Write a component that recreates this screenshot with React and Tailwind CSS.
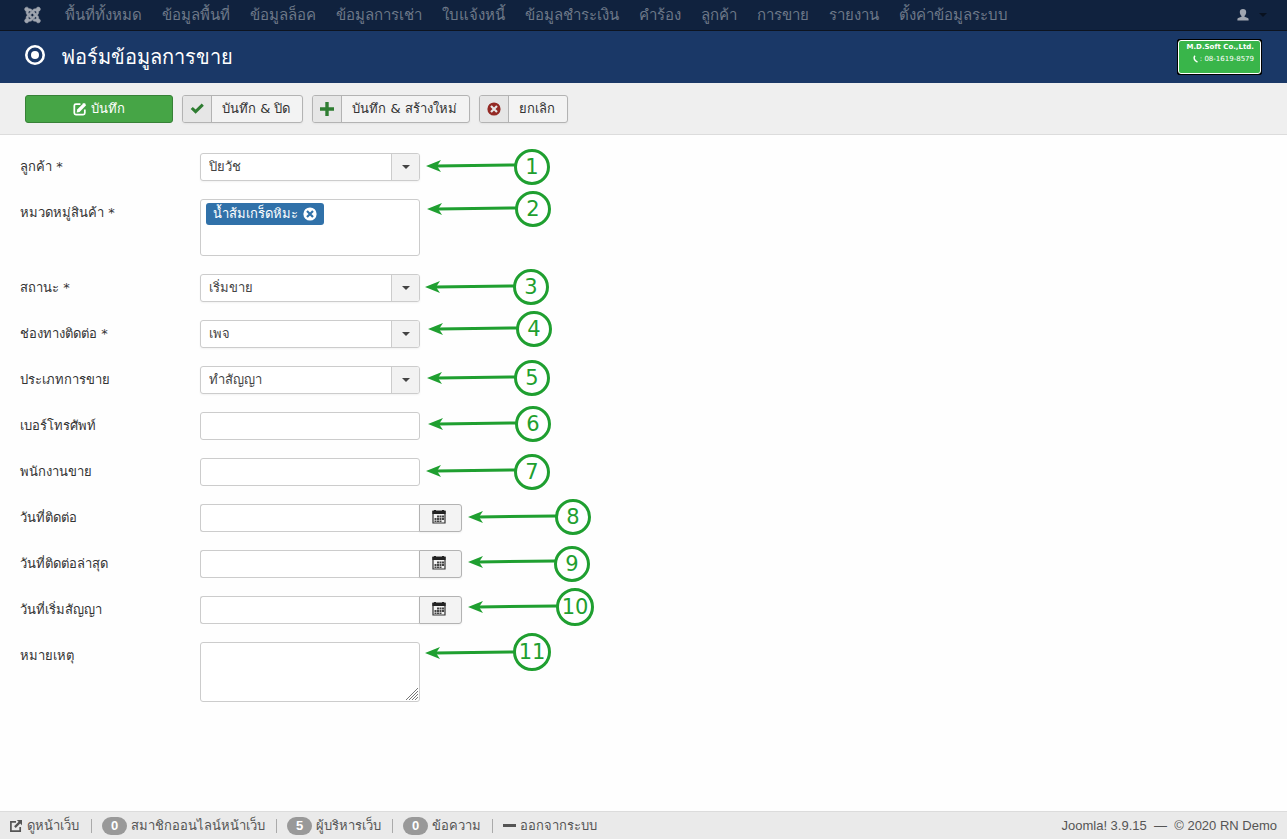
import React, { useState } from 'react';
import { FaJoomla } from 'react-icons/fa';

const menuItems = [
  'พื้นที่ทั้งหมด',
  'ข้อมูลพื้นที่',
  'ข้อมูลล็อค',
  'ข้อมูลการเช่า',
  'ใบแจ้งหนี้',
  'ข้อมูลชำระเงิน',
  'คำร้อง',
  'ลูกค้า',
  'การขาย',
  'รายงาน',
  'ตั้งค่าข้อมูลระบบ',
];

// tip = arrow head, cx/cy = centre of the number circle
const steps = [
  { n: 1, tipX: 426, tipY: 31, cx: 532, cy: 32, r: 16.5 },
  { n: 2, tipX: 427, tipY: 74, cx: 533, cy: 74, r: 16.5 },
  { n: 3, tipX: 425, tipY: 152, cx: 531, cy: 152, r: 16.5 },
  { n: 4, tipX: 428, tipY: 194, cx: 534, cy: 194, r: 16.5 },
  { n: 5, tipX: 427, tipY: 243, cx: 532, cy: 243, r: 16.5 },
  { n: 6, tipX: 428, tipY: 289, cx: 533, cy: 289, r: 16.5 },
  { n: 7, tipX: 426, tipY: 336, cx: 532, cy: 337, r: 16.5 },
  { n: 8, tipX: 468, tipY: 382, cx: 573, cy: 382, r: 16.5 },
  { n: 9, tipX: 468, tipY: 427, cx: 572, cy: 429, r: 16.5 },
  { n: 10, tipX: 468, tipY: 472, cx: 575, cy: 472, r: 17.5 },
  { n: 11, tipX: 425, tipY: 518, cx: 532, cy: 517, r: 17.5 },
];

const EditIcon = () => (
  <svg className="w-3.5 h-3.5" viewBox="0 0 16 16" fill="none" aria-hidden="true">
    <path d="M13.5 8.5v4.2c0 1-.8 1.8-1.8 1.8H3.3c-1 0-1.8-.8-1.8-1.8V4.3c0-1 .8-1.8 1.8-1.8h5.2" stroke="currentColor" strokeWidth="2" />
    <path d="M4.8 8.6 12 1.4a.8.8 0 0 1 1.1 0l1.6 1.6a.8.8 0 0 1 0 1.1l-7.2 7.2-3.3.6z" fill="currentColor" />
  </svg>
);

const CheckIcon = () => (
  <svg className="w-3.5 h-3.5 text-[#2f7d32]" viewBox="0 0 16 16" aria-hidden="true">
    <path d="M13.4 1.8 15.8 4.2 6.4 13.400.8 8 3.2 5.6l3.200 3z" fill="currentColor" />
  </svg>
);

const PlusIcon = () => (
  <svg className="w-3.5 h-3.5 text-[#2f7d32]" viewBox="0 0 14 14" aria-hidden="true">
    <path d="M5.3 0h3.4v5.3H14v3.4H8.7V14H5.3V8.7H0V5.3h5.3z" fill="currentColor" />
  </svg>
);

const CancelIcon = ({ className, cross }) => (
  <svg className={className} viewBox="0 0 14 14" aria-hidden="true">
    <circle cx="7" cy="7" r="6.6" fill="currentColor" />
    <path d="m4 4 6 6m0-6-6 6" stroke={cross} strokeWidth="2.2" />
  </svg>
);

const CalendarIcon = () => (
  <svg className="w-3.5 h-3.5" viewBox="0 0 14 14" aria-hidden="true">
    <path d="M1 1h12v12H1z" fill="#f3f3f3" stroke="#333" strokeWidth="1.2" />
    <path d="M.4 1h13.200v3H.4z" fill="#222" />
    <path d="M2 0h2v1H2zM10 0h2v1h-2z" fill="#222" />
    <path d="M5 5.500h2v2H5zM7.500 5.500h2v2h-2zM10 5.500h2v2h-2zM2.500 8h2v2h-2zM5 8h2v2H5zM7.500 8h2v2h-2zM10 8h2v2h-2zM2.500 10.500h2v1.500h-2zM5 10.500h2v1.500H5zM7.500 10.500h2v1.500h-2z" fill="#444" />
  </svg>
);

const UserIcon = () => (
  <svg className="w-3 h-3" viewBox="0 0 12 12" aria-hidden="true">
    <path d="M6 0c2 0 3.200 1.200 3.200 3 0 1.600-.7 3.200-1.700 4v.8l3.300 1.200c.6.300.8.700.8 1.300v1.200H.4v-1.200c0-.6.200-1 .8-1.300l3.300-1.200V7c-1-.8-1.700-2.400-1.700-4 0-1.800 1.200-3 3.200-3z" fill="currentColor" />
  </svg>
);

const OutIcon = () => (
  <svg className="w-3 h-3" viewBox="0 0 12 12" fill="none" aria-hidden="true">
    <path d="M6 1.800H.9v9.300h9.300V7" stroke="currentColor" strokeWidth="1.700" />
    <path d="M6.800 0H12v5.200l-1.800-1.800-4.500 4.500-1.600-1.600 4.500-4.500z" fill="currentColor" />
  </svg>
);

const Caret = ({ className }) => (
  <svg className={className} viewBox="0 0 8 4" aria-hidden="true">
    <path d="M0 0h8L4 4z" fill="currentColor" />
  </svg>
);

const ToolButton = ({ icon, children }) => (
  <button type="button" className="flex h-7 rounded-[3px] border border-[#b3b3b3] bg-[#f3f3f3] text-[#333] overflow-hidden shadow-xs">
    <span className="flex h-full w-[29px] items-center justify-center border-r border-[#b3b3b3] bg-[#e6e6e6]">{icon}</span>
    <span className="pl-2.5 pr-3 leading-[26px]">{children}</span>
  </button>
);

const Row = ({ id, label, children }) => (
  <div className="flex items-start">
    <label htmlFor={id} className="w-[180px] shrink-0 leading-7 font-['DejaVu_Sans',sans-serif]">{label}</label>
    {children}
  </div>
);

const SelectField = ({ id, label, value }) => (
  <Row id={id} label={label}>
    <div className="relative w-[220px]">
      <select id={id} defaultValue={value} className="h-7 w-full appearance-none rounded-[3px] border border-[#ccc] bg-white px-2 leading-[26px] text-[#444] shadow-xs">
        <option>{value}</option>
      </select>
      <span className="pointer-events-none absolute inset-y-px right-px flex w-7 items-center justify-center rounded-r-[2px] border-l border-[#ccc] bg-[#f2f2f2] text-[#444]">
        <Caret className="h-1 w-2" />
      </span>
    </div>
  </Row>
);

const TextField = ({ id, label }) => (
  <Row id={id} label={label}>
    <input id={id} type="text" className="h-7 w-[220px] rounded-[3px] border border-[#ccc] bg-white px-2" />
  </Row>
);

const DateField = ({ id, label }) => (
  <Row id={id} label={label}>
    <div className="flex">
      <input id={id} type="text" className="h-7 w-[219px] rounded-l-[3px] border border-r-0 border-[#ccc] bg-white px-2" />
      <button type="button" aria-label={label} className="flex h-7 w-[43px] items-center justify-center rounded-r-[3px] border border-[#b3b3b3] bg-[#f3f3f3] pr-1 pb-0.5 shadow-xs">
        <CalendarIcon />
      </button>
    </div>
  </Row>
);

const StepMarks = () => (
  <svg className="pointer-events-none absolute left-0 top-0 h-[560px] w-[620px]" viewBox="0 0 620 560">
    {steps.map(s => (
      <g key={s.n}>
        <path d={`M${s.tipX + 10} ${s.tipY}L${s.cx - s.r} ${s.tipY - 1}`} stroke="#1f9f30" strokeWidth="3" />
        <path d={`M${s.tipX} ${s.tipY}l15-6-4 6 4 6z`} fill="#1f9f30" />
        <circle cx={s.cx} cy={s.cy} r={s.r} fill="#fff" stroke="#1f9f30" strokeWidth="3" />
        <text x={s.cx} y={s.cy + 7} textAnchor="middle" fill="#1f9f30" className="font-['DejaVu_Sans'] text-[21px]">{s.n}</text>
      </g>
    ))}
  </svg>
);

const StatusItem = ({ count, children }) => (
  <li className="flex h-3.5 items-center border-l border-[#aaa] pl-2.5 pr-[11px]">
    <a href="#" className="flex items-center gap-1">
      {count !== undefined && (
        <span className="flex h-[18px] w-[25px] items-center justify-center rounded-full bg-[#999] font-bold text-white">{count}</span>
      )}
      {children}
    </a>
  </li>
);

const App = () => {
  const [tags, setTags] = useState(['น้ำส้มเกร็ดหิมะ']);

  return (
    <div className="flex min-h-screen flex-col bg-[#fefefe] font-['Liberation_Sans',sans-serif] text-[13px] text-[#333]">
      {/* Top menu */}
      <nav className="flex h-[31px] items-center border-b border-[#0d1420] bg-[#10223e] pl-6 pr-5 text-[#6d7888]">
        <a href="#" aria-label="Joomla" className="mr-6 text-[#a0a6b0]">
          <FaJoomla className="h-[18px] w-[17px] stroke-current stroke-[16px]" />
        </a>
        <ul className="flex flex-1 gap-5 whitespace-nowrap text-[15px] leading-[30px]">
          {menuItems.map(item => (
            <li key={item}><a href="#">{item}</a></li>
          ))}
        </ul>
        <button type="button" aria-label="User menu" className="flex items-center gap-2.5 text-[#a0a6b0]">
          <UserIcon />
          <Caret className="h-1 w-2 text-[#08111f]" />
        </button>
      </nav>

      {/* Title bar */}
      <header className="flex h-[52px] items-center justify-between bg-[#1a3867] pl-[25px] pr-[25px] text-white">
        <h1 className="flex items-center gap-4 text-[20px] leading-9">
          <svg className="mb-1 h-5 w-5" viewBox="0 0 20 20" fill="none" aria-hidden="true">
            <circle cx="10" cy="10" r="8.700" stroke="currentColor" strokeWidth="2.600" />
            <circle cx="10" cy="10" r="4" fill="currentColor" />
          </svg>
          ฟอร์มข้อมูลการขาย
        </h1>
        <div className="rounded-[2px] border border-black bg-black">
          <div className="flex h-[34px] w-[83px] flex-col items-end justify-center whitespace-nowrap rounded-[3px] border border-white bg-[#39b54a] pb-2 pr-1.5 font-['DejaVu_Sans']">
            <span className="text-[7px] font-bold leading-3">M.D.Soft Co.,Ltd.</span>
            <span className="flex items-center text-[7px] leading-3">
              <svg className="h-2 w-2" viewBox="0 0 8 8" fill="none" aria-hidden="true">
                <path d="M3 .8C1.300 2.500 2 5.500 5.500 7.200" stroke="currentColor" strokeWidth="1.500" />
              </svg>
              : 08-1619-8579
            </span>
          </div>
        </div>
      </header>

      {/* Toolbar */}
      <div className="flex h-[52px] items-center gap-[9px] border-b border-[#dcdcdc] bg-[#efefef] px-[25px] font-['DejaVu_Sans',sans-serif]">
        <button type="button" className="flex h-7 w-[148px] items-center justify-center gap-1 rounded-[3px] border border-[#378137] bg-[#46a546] text-white">
          <EditIcon />
          บันทึก
        </button>
        <ToolButton icon={<CheckIcon />}>บันทึก &amp; ปิด</ToolButton>
        <ToolButton icon={<PlusIcon />}>บันทึก &amp; สร้างใหม่</ToolButton>
        <ToolButton icon={<CancelIcon className="h-3.5 w-3.5 text-[#942a25]" cross="#e6e6e6" />}>ยกเลิก</ToolButton>
      </div>

      {/* Form */}
      <form className="relative flex flex-1 flex-col gap-[18px] px-5 py-[18px]">
        <SelectField id="customer" label="ลูกค้า *" value="ปิยวัช" />
        <Row id="category" label="หมวดหมู่สินค้า *">
          <div className="flex h-[57px] w-[220px] flex-wrap items-start rounded-[3px] border border-[#ccc] bg-white px-[5px] py-[3px]">
            {tags.map(tag => (
              <span key={tag} className="flex h-[22px] items-center gap-[5px] rounded-[3px] bg-[#3071a9] px-[7px] text-white">
                {tag}
                <button type="button" aria-label="Remove" onClick={() => setTags(tags.filter(t => t !== tag))}>
                  <CancelIcon className="h-3.5 w-3.5" cross="#3071a9" />
                </button>
              </span>
            ))}
            <input id="category" type="text" className="h-5 w-4 outline-none" />
          </div>
        </Row>
        <SelectField id="status" label="สถานะ *" value="เริ่มขาย" />
        <SelectField id="channel" label="ช่องทางติดต่อ *" value="เพจ" />
        <SelectField id="saletype" label="ประเภทการขาย" value="ทำสัญญา" />
        <TextField id="phone" label="เบอร์โทรศัพท์" />
        <TextField id="seller" label="พนักงานขาย" />
        <DateField id="contact" label="วันที่ติดต่อ" />
        <DateField id="lastcontact" label="วันที่ติดต่อล่าสุด" />
        <DateField id="contract" label="วันที่เริ่มสัญญา" />
        <Row id="note" label="หมายเหตุ">
          <div className="relative w-[220px]">
            <textarea id="note" className="block h-[60px] w-full resize-none rounded-[3px] border border-[#ccc] bg-white px-2" />
            <svg className="pointer-events-none absolute bottom-0.5 right-0.5 h-3 w-3" viewBox="0 0 12 12" aria-hidden="true">
              <path d="M0 12 12 0M3 12l9-9M6 12l6-6M9 12l3-3" stroke="#777" />
            </svg>
          </div>
        </Row>
        <StepMarks />
      </form>

      {/* Status bar */}
      <footer className="flex h-7 items-center justify-between border-t border-[#dcdcdc] bg-[#eaeaea] px-2.5 text-[#555]">
        <ul className="flex items-center whitespace-nowrap">
          <li className="pr-3">
            <a href="#" className="flex items-center gap-[5px]"><OutIcon />ดูหน้าเว็บ</a>
          </li>
          <StatusItem count={0}>สมาชิกออนไลน์หน้าเว็บ</StatusItem>
          <StatusItem count={5}>ผู้บริหารเว็บ</StatusItem>
          <StatusItem count={0}>ข้อความ</StatusItem>
          <StatusItem>
            <span className="h-[3px] w-[13px] bg-[#555]"></span>
            ออกจากระบบ
          </StatusItem>
        </ul>
        <p className="whitespace-pre">Joomla! 3.9.15  —  © 2020 RN Demo</p>
      </footer>
    </div>
  );
};

export default App;
